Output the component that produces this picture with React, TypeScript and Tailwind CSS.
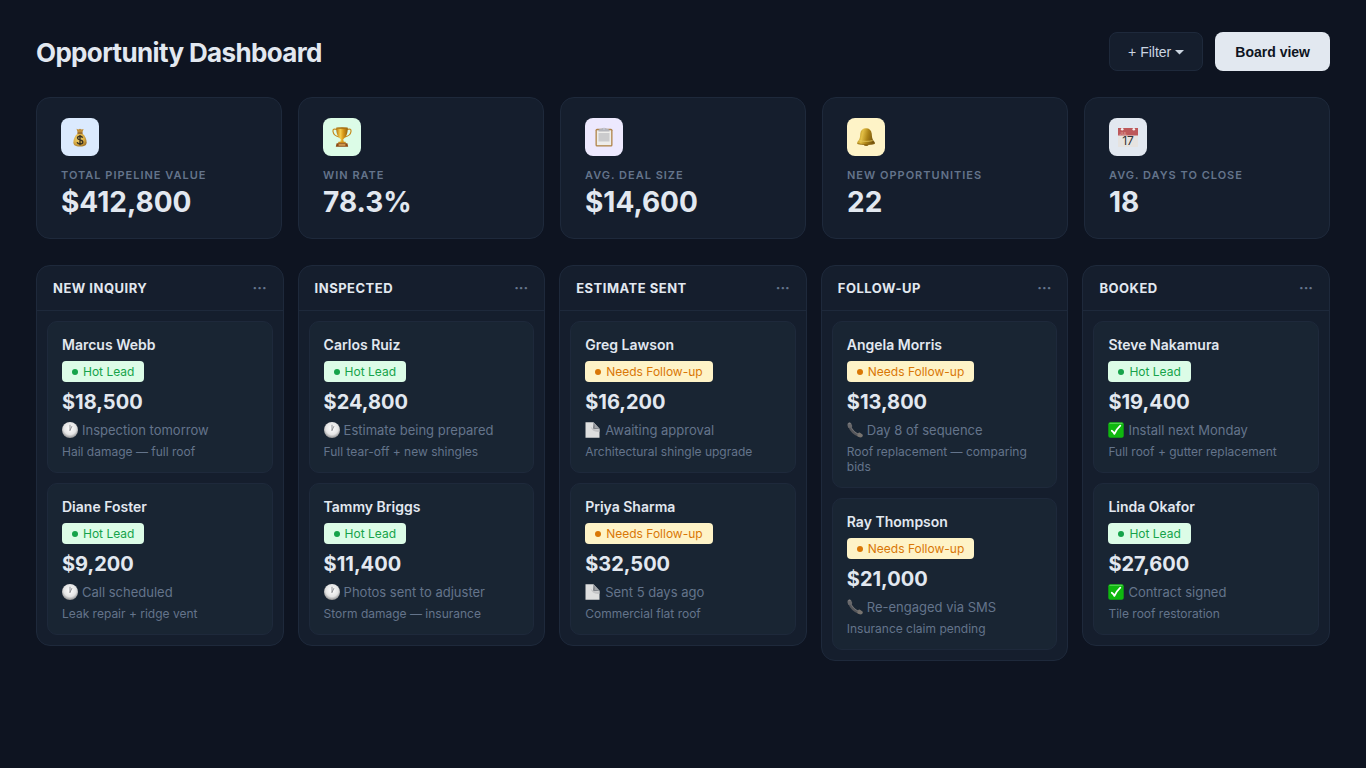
import type { ReactNode } from 'react'

type Status = 'hot' | 'followup'
type MetaIcon = 'clock' | 'page' | 'phone' | 'check'

interface Deal {
  name: string
  status: Status
  amount: string
  icon: MetaIcon
  meta: string
  note: string
}

/* ---------- Stat icons ---------- */

function MoneyBagIcon() {
  return (
    <svg className="size-5" viewBox="0 0 20 20" fill="none" aria-hidden="true">
      <defs>
        <radialGradient id="bag" cx="0.4" cy="0.4" r="0.7">
          <stop offset="0" stopColor="#f3d978" />
          <stop offset="0.6" stopColor="#d9ac45" />
          <stop offset="1" stopColor="#9a6c22" />
        </radialGradient>
      </defs>
      <path d="M6.5 1.8 8.3 2.500 10 1.700l1.700.8 1.900-.6-1.400 4H7.800z" fill="#c2903c" />
      <path d="M7.600 6.500c-2.900 2.500-4.200 5.800-4.200 8.800 0 2.800 1.500 4.200 6.600 4.200s6.600-1.400 6.600-4.200c0-3-1.300-6.300-4.200-8.800z" fill="url(#bag)" />
      <path d="M7.400 5.500h5.200v1.300H7.400z" fill="#8a5a1c" />
      <path d="M12.600 10.700c-.3-1-1.300-1.500-2.600-1.500-1.500 0-2.500.7-2.500 1.900 0 2.700 5.300 1.200 5.300 4 0 1.200-1.200 2-2.800 2-1.500 0-2.600-.7-2.900-1.900M10 8v10.300" stroke="#3b3322" strokeWidth="1.400" />
    </svg>
  )
}

function TrophyIcon() {
  return (
    <svg className="size-5" viewBox="0 0 20 20" fill="none" aria-hidden="true">
      <defs>
        <linearGradient id="cup" x1="0" x2="1" y1="0" y2="0">
          <stop offset="0" stopColor="#b07510" />
          <stop offset="0.35" stopColor="#f6cf4e" />
          <stop offset="0.6" stopColor="#d99a1a" />
          <stop offset="1" stopColor="#94600c" />
        </linearGradient>
      </defs>
      <path d="M5 2.500C2 1.400.7 2.500 1 4.500c.4 2.800 3 4.800 6 5.500M15 2.500c3-1.100 4.300 0 4 2-.4 2.800-3 4.800-6 5.500" stroke="#c58a1c" strokeWidth="1.200" />
      <path d="M4.200.8h11.600c0 5.500-1.400 9.500-4.600 11.400l.6 3H8.200l.6-3C5.600 10.300 4.200 6.300 4.200.8z" fill="url(#cup)" />
      <ellipse cx="10" cy="1" rx="5.800" ry=".7" fill="#a46d12" />
      <path d="M6.500 14.800h7l.6 1.700H5.900z" fill="#c98a1a" />
      <path d="M4.600 16.300h10.800l.8 3.400H3.800z" fill="#8c4a12" />
      <path d="M6.600 17.300h6.800v1.300H6.600z" fill="#e8b968" />
    </svg>
  )
}

function ClipboardIcon() {
  return (
    <svg className="size-5" viewBox="0 0 20 20" fill="none" aria-hidden="true">
      <rect x="1.500" y="1.800" width="17" height="17.800" rx="1.500" fill="#b08348" />
      <path d="M2.800 3.300h14.400v14.900H2.800z" fill="#eeedeb" />
      <path d="M4.500 6h11v8.500h-11z" fill="#cbcbcd" />
      <path d="M4.500 3.200c0-1.300 3-.9 3.800-1.900.7-.9 2.700-.9 3.400 0 .8 1 3.800.6 3.800 1.900v1.300h-11z" fill="#b3b4ba" />
      <circle cx="10" cy="1.900" r=".6" fill="#ece8ff" />
    </svg>
  )
}

function BellIcon() {
  return (
    <svg className="size-5" viewBox="0 0 20 20" fill="none" aria-hidden="true">
      <defs>
        <linearGradient id="bell" x1="0" x2="1" y1="0" y2="0.2">
          <stop offset="0" stopColor="#a8821a" />
          <stop offset="0.35" stopColor="#e2be45" />
          <stop offset="0.65" stopColor="#ad8417" />
          <stop offset="1" stopColor="#75540c" />
        </linearGradient>
      </defs>
      <ellipse cx="10.200" cy="17.500" rx="2.400" ry="1.600" fill="#8a6412" />
      <path d="M10 1.200c-3.300 0-5.300 2-5.700 5.300-.4 3.600-.2 5.500-2.300 7.700-.8.800-1 1.500-.7 2.500 2 .8 5 1.100 8.700 1.100s6.700-.3 8.800-1c.4-1-.1-1.800-.9-2.600-2-2.200-1.800-4.100-2.200-7.700C15.300 3.200 13.300 1.200 10 1.200z" fill="url(#bell)" />
      <path d="M3.300 13.600c3.800 1 9.600 1 13.400 0" stroke="#e6ca60" strokeWidth=".8" />
      <path d="M1.500 16.600c4.500 1.200 12.500 1.200 17 0" stroke="#8b6510" strokeWidth=".8" />
    </svg>
  )
}

function CalendarIcon() {
  return (
    <svg className="size-5" viewBox="0 0 20 20" fill="none" aria-hidden="true">
      <path d="M0 1h20v19H0z" fill="#e6e3e0" />
      <path d="M0 1h20v7.500H0z" fill="#bd585a" />
      <circle cx="4.200" cy="2.200" r="1.300" fill="#f3eeee" />
      <circle cx="15.800" cy="2.200" r="1.300" fill="#f3eeee" />
      <text x="1.600" y="7.500" fontSize="4" fontFamily="Inter, sans-serif" fill="#e6b9b9">JUL</text>
      <text x="10" y="18" textAnchor="middle" fontSize="12" fontFamily="Inter, sans-serif" fill="#333336">17</text>
    </svg>
  )
}

/* ---------- Card icons ---------- */

function ClockIcon() {
  return (
    <svg className="size-4 shrink-0" viewBox="0 0 16 16" fill="none" aria-hidden="true">
      <defs>
        <radialGradient id="face" cx="0.5" cy="0.4" r="0.6">
          <stop offset="0" stopColor="#ffffff" />
          <stop offset="0.65" stopColor="#e4e4e4" />
          <stop offset="1" stopColor="#8f8f90" />
        </radialGradient>
      </defs>
      <circle cx="8" cy="8" r="8" fill="url(#face)" />
      <path d="M8 8.300V3.200M8 8.300l1.800-3.800" stroke="#85868a" strokeWidth=".9" strokeLinecap="round" />
    </svg>
  )
}

function PageIcon() {
  return (
    <svg className="size-4 shrink-0" viewBox="0 0 16 16" fill="none" aria-hidden="true">
      <path d="M.5.300h8l6 6.500v8.900H.5z" fill="#dedfdf" />
      <path d="M5.500 4.500c2 2.500 5 3.300 9 2.800v2.500C9.500 10.300 6.500 8.500 5.500 4.500z" fill="#c3c4c6" />
      <path d="M8.500.300l6 6.700H9.300c-.9 0-1.300-.5-1.300-1.300C8.100 3.800 8.600 2 8.500.300z" fill="#7d8187" />
      <path d="M8.500.300l6 6.500c-1.800-.8-3.300-1-4.800-.8.300-2-.1-4-1.200-5.700z" fill="#a2a5a9" />
    </svg>
  )
}

function PhoneIcon() {
  return (
    <svg className="size-4 shrink-0" viewBox="0 0 16 16" fill="none" aria-hidden="true">
      <path d="M2.300 3.500C4 8.200 7.600 12 12.800 13.800" stroke="#55565a" strokeWidth="3" />
      <path d="M3.200 3.800C5 8 8 11 12.300 12.700" stroke="#77787b" strokeWidth=".8" />
      <path d="M.7 1.500C1.300.3 3.300 0 4 1l1.200 2.700c.2.800-.3 1.500-1.200 1.900L1.600 6C.6 4.700.2 2.700.7 1.500z" fill="#68686b" />
      <path d="M14.600 15.300c1.100-.5 1.600-2.100.9-2.900l-2.500-1.700c-.8-.4-1.600 0-2 .8l-.8 2.300c1.200 1.200 3.200 2 4.400 1.500z" fill="#77736f" />
      <path d="M1.500 1.700c.6-.5 1.300-.6 1.800-.3" stroke="#999a9c" strokeWidth=".7" />
    </svg>
  )
}

function CheckIcon() {
  return (
    <svg className="size-4 shrink-0" viewBox="0 0 16 16" fill="none" aria-hidden="true">
      <rect x=".3" y=".3" width="15.400" height="15.400" rx="2" fill="#0fb80f" />
      <path d="M1.500 1.300h13" stroke="#5fd65c" strokeWidth="1" />
      <path d="M3.800 8.700c1.200.8 2 1.800 2.600 3.200C7.800 8.700 9.700 6 12.300 3.600" stroke="#fff" strokeWidth="1.800" strokeLinecap="round" strokeLinejoin="round" />
    </svg>
  )
}

const META_ICONS: Record<MetaIcon, ReactNode> = {
  clock: <ClockIcon />,
  page: <PageIcon />,
  phone: <PhoneIcon />,
  check: <CheckIcon />,
}

/* ---------- Data ---------- */

const STATS = [
  { label: 'Total pipeline value', value: '$412,800', tint: 'bg-[#dbeafe]', icon: <MoneyBagIcon /> },
  { label: 'Win rate', value: '78.3%', tint: 'bg-[#dcfce7]', icon: <TrophyIcon /> },
  { label: 'Avg. deal size', value: '$14,600', tint: 'bg-[#ede9fe]', icon: <ClipboardIcon /> },
  { label: 'New opportunities', value: '22', tint: 'bg-[#fef3c7]', icon: <BellIcon /> },
  { label: 'Avg. days to close', value: '18', tint: 'bg-[#e2e8f0]', icon: <CalendarIcon /> },
]

const COLUMNS: { title: string; deals: Deal[] }[] = [
  {
    title: 'New inquiry',
    deals: [
      { name: 'Marcus Webb', status: 'hot', amount: '$18,500', icon: 'clock', meta: 'Inspection tomorrow', note: 'Hail damage — full roof' },
      { name: 'Diane Foster', status: 'hot', amount: '$9,200', icon: 'clock', meta: 'Call scheduled', note: 'Leak repair + ridge vent' },
    ],
  },
  {
    title: 'Inspected',
    deals: [
      { name: 'Carlos Ruiz', status: 'hot', amount: '$24,800', icon: 'clock', meta: 'Estimate being prepared', note: 'Full tear-off + new shingles' },
      { name: 'Tammy Briggs', status: 'hot', amount: '$11,400', icon: 'clock', meta: 'Photos sent to adjuster', note: 'Storm damage — insurance' },
    ],
  },
  {
    title: 'Estimate sent',
    deals: [
      { name: 'Greg Lawson', status: 'followup', amount: '$16,200', icon: 'page', meta: 'Awaiting approval', note: 'Architectural shingle upgrade' },
      { name: 'Priya Sharma', status: 'followup', amount: '$32,500', icon: 'page', meta: 'Sent 5 days ago', note: 'Commercial flat roof' },
    ],
  },
  {
    title: 'Follow-up',
    deals: [
      { name: 'Angela Morris', status: 'followup', amount: '$13,800', icon: 'phone', meta: 'Day 8 of sequence', note: 'Roof replacement — comparing bids' },
      { name: 'Ray Thompson', status: 'followup', amount: '$21,000', icon: 'phone', meta: 'Re-engaged via SMS', note: 'Insurance claim pending' },
    ],
  },
  {
    title: 'Booked',
    deals: [
      { name: 'Steve Nakamura', status: 'hot', amount: '$19,400', icon: 'check', meta: 'Install next Monday', note: 'Full roof + gutter replacement' },
      { name: 'Linda Okafor', status: 'hot', amount: '$27,600', icon: 'check', meta: 'Contract signed', note: 'Tile roof restoration' },
    ],
  },
]

const BADGES: Record<Status, { label: string; box: string; dot: string }> = {
  hot: { label: 'Hot Lead', box: 'bg-[#dcfce7] text-[#16a34a]', dot: 'bg-[#16a34a]' },
  followup: { label: 'Needs Follow-up', box: 'bg-[#fef3c7] text-[#d97706]', dot: 'bg-[#d97706]' },
}

function DealCard({ deal }: { deal: Deal }) {
  const badge = BADGES[deal.status]
  return (
    <article className="flex flex-col items-start rounded-[10px] border border-[#1e293b] bg-[#192533] px-3.5 pt-3.5 pb-[13px]">
      <h3 className="mb-[7px] text-[14px] leading-[18px] font-semibold">{deal.name}</h3>
      <span className={`mb-2 flex items-center gap-[5px] rounded-[4px] px-2.5 py-[3px] text-[12px] leading-[15px] ${badge.box}`}>
        <span className={`size-1.5 rounded-full ${badge.dot}`} />
        {badge.label}
      </span>
      <p className="mb-2 text-[20px] leading-6 font-bold">{deal.amount}</p>
      <p className="mb-[6px] flex items-center gap-1 text-[13px] leading-4 text-[#64748b]">
        {META_ICONS[deal.icon]}
        {deal.meta}
      </p>
      <p className="text-[12px] leading-[15px] text-[#64748b]">{deal.note}</p>
    </article>
  )
}

export default function App() {
  return (
    <main className="min-h-screen bg-[#0e1421] px-9 py-8 font-['Inter',sans-serif] text-[#e2e8f0]">
      <header className="mb-[26px] flex items-center justify-between">
        <h1 className="pt-0.5 text-[26px] leading-8 font-bold tracking-tight">Opportunity Dashboard</h1>
        <div className="flex gap-3 font-['Liberation_Sans',Arial,sans-serif] text-[14px] leading-[17px]">
          <button type="button" className="flex items-center gap-1 rounded-lg border border-[#1e293b] bg-[#151e2d] px-[18px] pt-[11px] pb-[9px] text-[#cbd5e1]">
            + Filter
            <svg className="h-[5px] w-[9px]" viewBox="0 0 9 5" fill="currentColor" aria-hidden="true">
              <path d="M0 0h9L4.500 4.500z" />
            </svg>
          </button>
          <button type="button" className="rounded-lg bg-[#e2e8f0] px-5 pt-3 pb-2.5 font-bold text-[#0e1421]">Board view</button>
        </div>
      </header>

      <section className="mb-[26px] grid grid-cols-5 gap-4">
        {STATS.map((s) => (
          <div key={s.label} className="rounded-[14px] border border-[#1e293b] bg-[#151e2d] px-6 py-5">
            <div className={`mb-3 flex size-[38px] items-center justify-center rounded-lg ${s.tint}`}>{s.icon}</div>
            <p className="mb-1 text-[11px] leading-[14px] font-semibold tracking-[1px] text-[#64748b] uppercase">{s.label}</p>
            <p className="text-[28px] leading-8 font-bold">{s.value}</p>
          </div>
        ))}
      </section>

      <section className="grid grid-cols-5 items-start gap-3.5">
        {COLUMNS.map((col) => (
          <div key={col.title} className="rounded-[14px] border border-[#1e293b] bg-[#151e2d]">
            <div className="flex items-center justify-between border-b border-[#1e293b] px-4 py-3.5">
              <h2 className="text-[13px] leading-4 font-bold tracking-[0.5px] uppercase">{col.title}</h2>
              <button type="button" aria-label={`${col.title} options`} className="text-[14px] leading-4 font-bold text-[#64748b]">
                ···
              </button>
            </div>
            <div className="flex flex-col gap-2.5 p-2.5">
              {col.deals.map((deal) => (
                <DealCard key={deal.name} deal={deal} />
              ))}
            </div>
          </div>
        ))}
      </section>
    </main>
  )
}
